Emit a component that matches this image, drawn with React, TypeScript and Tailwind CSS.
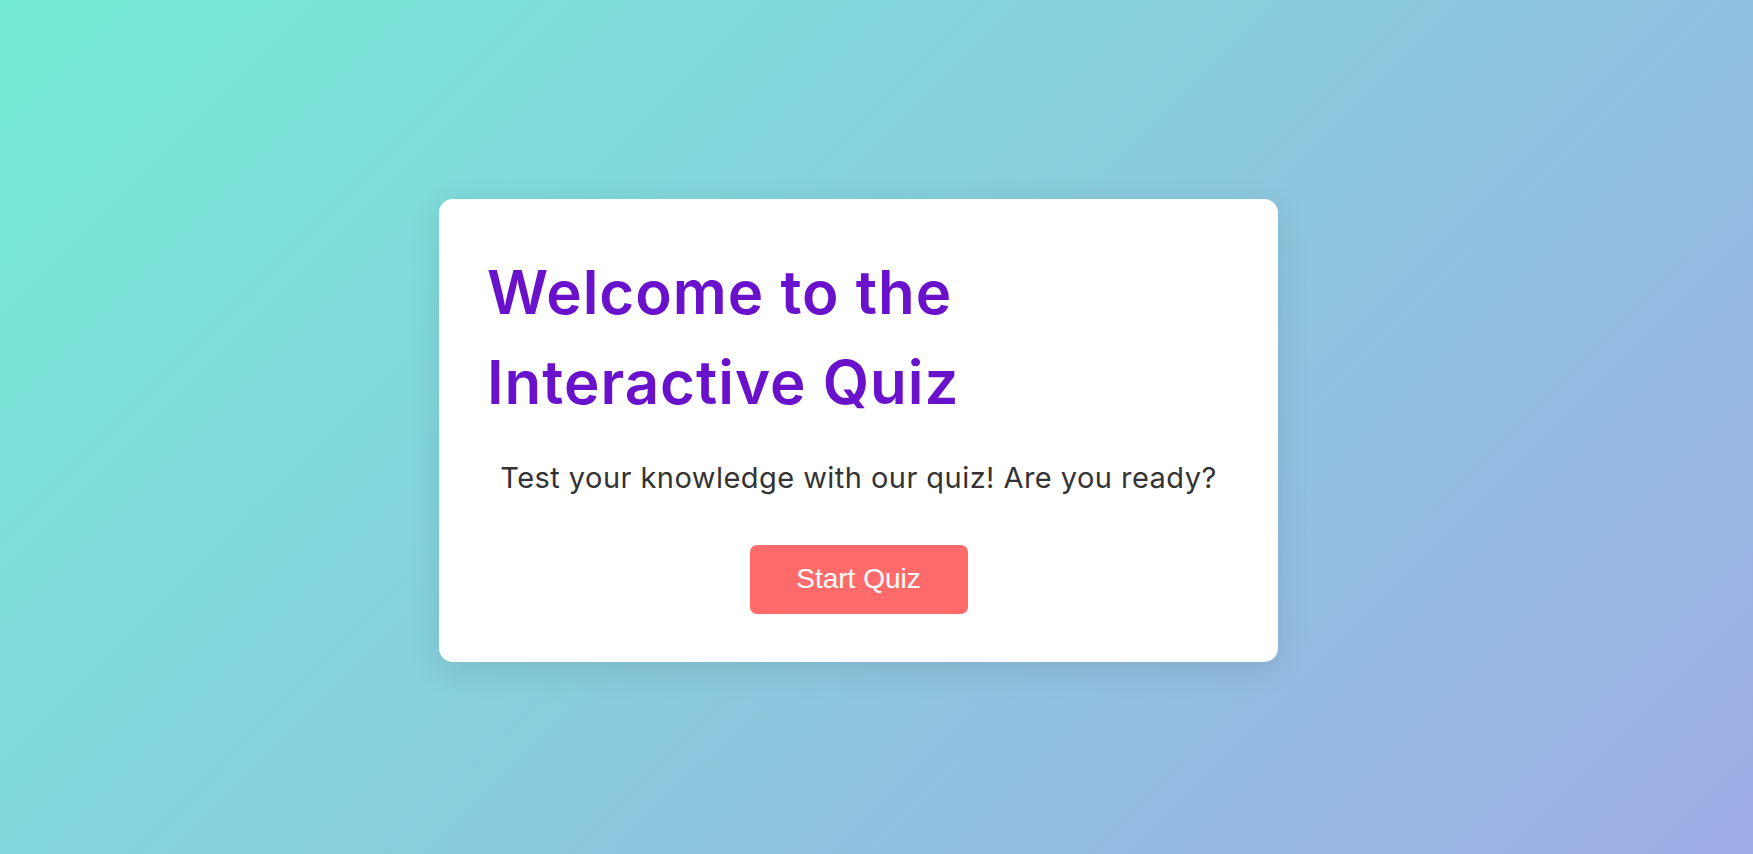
const App: React.FC = () => {
  return (
    <div className="min-h-screen w-full flex items-center justify-center bg-[linear-gradient(135deg,#74ebd5,#9face6)]">
      <div className="w-[839px] mr-[36px] mt-[7px] bg-white rounded-[14px] shadow-[0_8px_32px_rgba(0,0,0,0.1)] px-12 pt-12 pb-12 flex flex-col font-['Inter',sans-serif]">
        <h1 className="text-[60px] leading-[90px] font-semibold tracking-[1px] text-[#6a11cb] text-left">
          Welcome to the
          <br />
          Interactive Quiz
        </h1>

        <p className="mt-[29px] text-[29px] leading-[43.5px] tracking-[0.45px] text-[#333] text-center">
          Test your knowledge with our quiz! Are you ready?
        </p>

        <button className="mt-[45px] mx-auto w-[218px] h-[69px] rounded-[7px] bg-[#ff6b6b] text-white text-[28px] font-['Liberation_Sans',Arial,sans-serif] flex items-center justify-center">
          Start Quiz
        </button>
      </div>
    </div>
  );
};

export default App;
